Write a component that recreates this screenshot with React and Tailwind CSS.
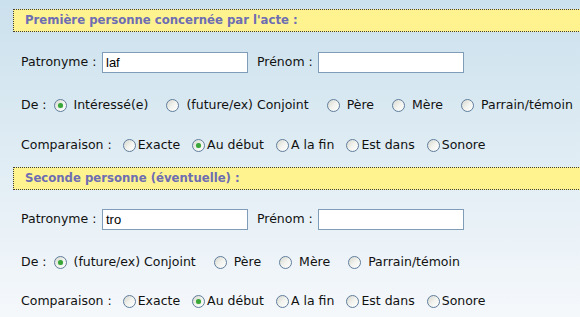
import React from 'react';

const Radio = ({ checked }) => (
  <span className="relative inline-flex w-[13px] h-[13px] shrink-0 items-center justify-center rounded-full border border-[#5f7d9c] bg-gradient-to-br from-[#d8d8d0] via-[#f2f2ee] to-white">
    {checked && <span className="w-[5px] h-[5px] rounded-full bg-[#3aa63a] shadow-[0_0_1px_#8fd88f]" />}
  </span>
);

const TextBox = ({ value }) => (
  <div className="w-[146px] h-[21px] shrink-0 border border-[#7f9db9] bg-white pl-[3px] flex items-center font-['Liberation_Sans',sans-serif] text-[13px] text-black">
    {value}
  </div>
);

const Header = ({ title, className }) => (
  <div className={`ml-[13px] w-[600px] h-[23px] shrink-0 border border-dotted border-[#3c3c3c] bg-[#fff390] pl-[11px] flex items-center font-bold text-[11.7px] text-[#6d6db2] whitespace-nowrap ${className}`}>
    {title}
  </div>
);

const NameRow = ({ value, className }) => (
  <div className={`flex items-center h-[21px] pl-[21px] whitespace-nowrap ${className}`}>
    <span className="w-[81px] shrink-0">Patronyme :</span>
    <TextBox value={value} />
    <span className="ml-[9px] w-[61px] shrink-0">Prénom :</span>
    <TextBox value="" />
  </div>
);

const DeRow = ({ options, className }) => (
  <div className={`flex items-center h-[20px] pl-[21px] whitespace-nowrap ${className}`}>
    <span className="mr-[7px] shrink-0">De :</span>
    {options.map((o) => (
      <label key={o.label} className="flex items-center shrink-0 mr-[18px]">
        <Radio checked={o.checked} />
        <span className="ml-[7px]">{o.label}</span>
      </label>
    ))}
  </div>
);

const CompRow = ({ className }) => {
  const opts = ['Exacte', 'Au début', 'A la fin', 'Est dans', 'Sonore'];
  return (
    <div className={`flex items-center h-[20px] pl-[21px] whitespace-nowrap ${className}`}>
      <span className="mr-[11px] shrink-0">Comparaison :</span>
      {opts.map((o) => (
        <label key={o} className="flex items-center shrink-0 mr-[12px]">
          <Radio checked={o === 'Au début'} />
          <span className="ml-[2px]">{o}</span>
        </label>
      ))}
    </div>
  );
};

export default function App() {
  return (
    <div className="w-[580px] h-[317px] overflow-hidden bg-gradient-to-b from-[#cbe1ed] to-[#f5f8fb] font-['DejaVu_Sans',sans-serif] text-[12.5px] text-[#111] flex flex-col pt-[9px]">
      <Header title="Première personne concernée par l'acte :" />
      <NameRow value="laf" className="mt-[20px]" />
      <DeRow
        className="mt-[22px]"
        options={[
          { label: 'Intéressé(e)', checked: true },
          { label: '(future/ex) Conjoint' },
          { label: 'Père' },
          { label: 'Mère' },
          { label: 'Parrain/témoin' },
        ]}
      />
      <CompRow className="mt-[20px]" />
      <Header title="Seconde personne (éventuelle) :" className="mt-[12px]" />
      <NameRow value="tro" className="mt-[19px]" />
      <DeRow
        className="mt-[22px]"
        options={[
          { label: '(future/ex) Conjoint', checked: true },
          { label: 'Père' },
          { label: 'Mère' },
          { label: 'Parrain/témoin' },
        ]}
      />
      <CompRow className="mt-[19px]" />
    </div>
  );
}
